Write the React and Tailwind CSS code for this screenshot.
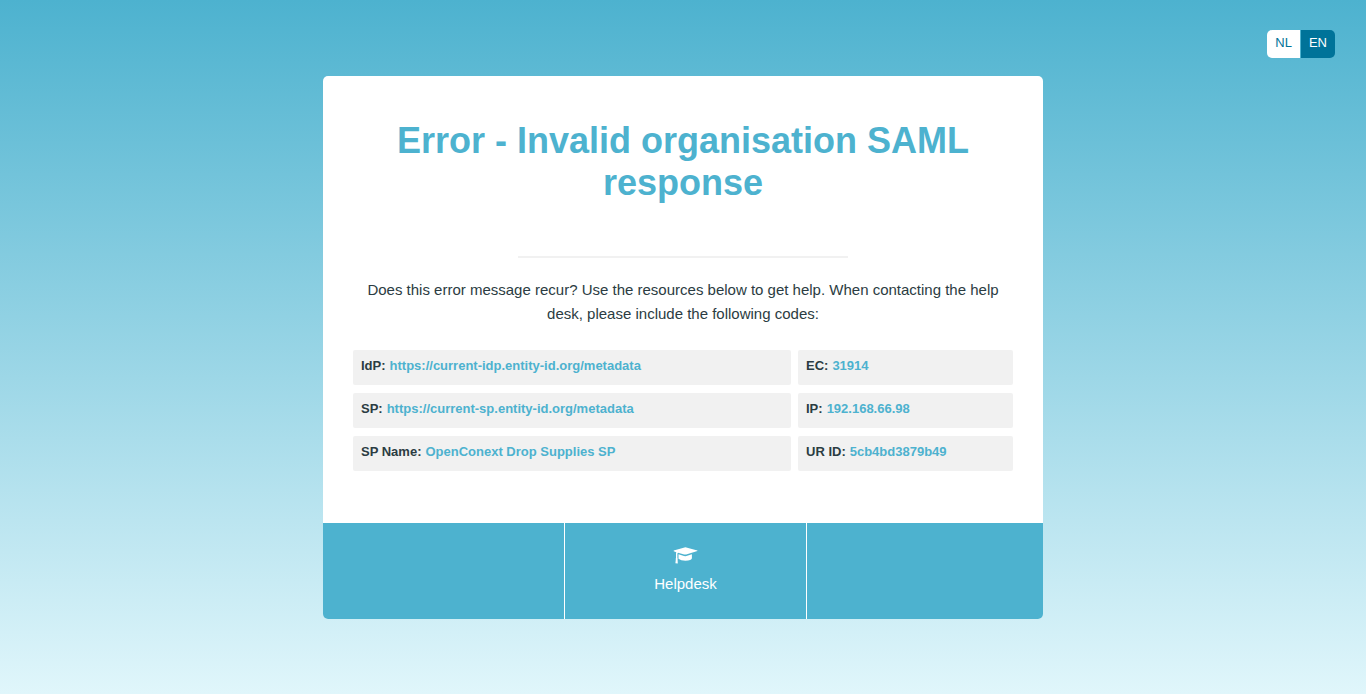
const codes = [
  ["IdP:", "https://current-idp.entity-id.org/metadata"],
  ["EC:", "31914"],
  ["SP:", "https://current-sp.entity-id.org/metadata"],
  ["IP:", "192.168.66.98"],
  ["SP Name:", "OpenConext Drop Supplies SP"],
  ["UR ID:", "5cb4bd3879b49"],
];

function LanguageSwitch() {
  return (
    <nav aria-label="Language" className="flex justify-end px-[31px] pt-[30px]">
      <div className="flex overflow-hidden rounded-[5px] text-[13px] leading-[26px]">
        <a href="#nl" className="h-7 border-r border-[#4db2cf] bg-white px-2 text-[#007399]">NL</a>
        <a href="#en" aria-current="true" className="h-7 bg-[#007399] px-2 text-white">EN</a>
      </div>
    </nav>
  );
}

function GraduationCap({ className }) {
  return (
    <svg viewBox="0 0 25 17" fill="currentColor" aria-hidden="true" className={className}>
      <path d="M12.4 .2 24.4 3.5V4L13.2 7.4Q12.2 7.6 11.2 7.4L5 5.8Q4.4 6.2 4.4 7V11Q4.9 11.6 4.6 12.4L4.8 16.4 2.4 16.2 2.8 12.4Q2.5 11.6 3 11V7Q3 5.8 3.3 5.2L.7 4.3V3.6Z" />
      <path d="M5.5 7.3 11 9Q12.2 9.3 13.4 9L18.9 7.3V11.2Q18.6 13.6 12.4 13.8 7.8 13.6 5.5 11.8Z" />
    </svg>
  );
}

export default function App() {
  return (
    <div className="min-h-screen bg-linear-to-b/srgb from-[#4db2cf] to-[#e0f6fb] pb-10 font-[Helvetica,'Liberation_Sans',sans-serif] text-[#2b3c42]">
      <LanguageSwitch />
      <main className="mx-auto mt-[18px] max-w-[720px] overflow-hidden rounded-[5px] bg-white">
        <section className="px-[30px] pt-11 pb-13">
          <h1 className="text-center text-4xl leading-[42px] font-bold text-[#4db2cf]">
            Error - Invalid organisation SAML response
          </h1>
          <hr className="mx-auto mt-[52px] w-1/2 border-t-2 border-[#f1f1f1]" />
          <p className="mt-5 text-center text-[15px] leading-6">
            Does this error message recur? Use the resources below to get help. When contacting the help desk, please include the following codes:
          </p>
          <dl className="mt-6 grid grid-cols-[438fr_215fr] gap-x-[7px] gap-y-2 text-[13px] leading-8 font-bold">
            {codes.map(([label, value]) => (
              <div key={label} className="flex h-[35px] gap-1 rounded-xs bg-[#f1f1f1] px-2">
                <dt>{label}</dt>
                <dd className="text-[#4db2cf]">{value}</dd>
              </div>
            ))}
          </dl>
        </section>
        <footer className="grid h-24 grid-cols-[242fr_242fr_236fr] bg-[#4db2cf] text-[15px] text-white">
          <div className="border-r border-white" />
          <a href="#helpdesk" className="flex flex-col items-center border-r border-white pt-6">
            <GraduationCap className="h-[17px] w-[25px]" />
            <span className="mt-2 leading-6">Helpdesk</span>
          </a>
          <div />
        </footer>
      </main>
    </div>
  );
}
